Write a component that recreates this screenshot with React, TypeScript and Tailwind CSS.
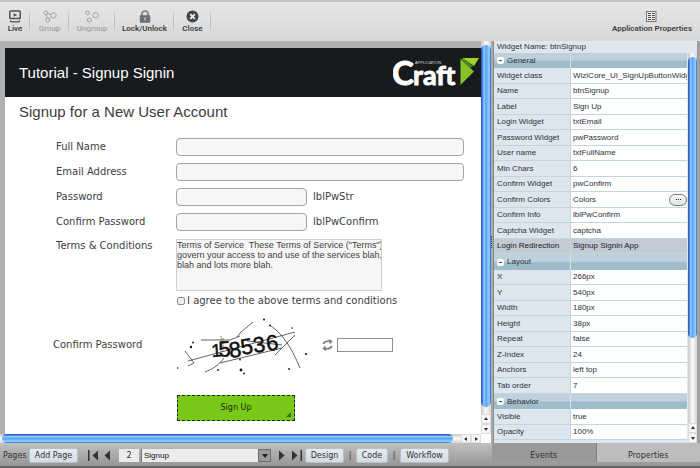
import React, { useState } from "react";

const verdana = "font-['DejaVu_Sans',Verdana,sans-serif]";
const arial = "font-['Liberation_Sans',Arial,sans-serif]";
const barV =
  "bg-[linear-gradient(90deg,#1d4fb0_0%,#3f7ce0_14%,#9fcdfa_30%,#5f9ff0_48%,#6bb4fb_62%,#8fd6ff_82%,#2b62c0_100%)]";
const barH =
  "bg-[linear-gradient(180deg,#1d4fb0_0%,#3f7ce0_14%,#9fcdfa_30%,#5f9ff0_48%,#6bb4fb_62%,#8fd6ff_82%,#2b62c0_100%)]";

function LiveIcon() {
  return (
    <svg width="14" height="13" viewBox="0 0 14 13" fill="none" stroke="#4d5359" aria-hidden="true">
      <rect x="1.8" y="1" width="10.4" height="7.6" rx="0.8" strokeWidth="1.5" />
      <path d="M5.6 3v3.8L9.2 4.9z" fill="#4d5359" stroke="none" />
      <path d="M2 10.4c.6 1.4 1.6 1.5 2.4 1.5h5.2c.8 0 1.8-.1 2.4-1.5" strokeWidth="1.2" />
    </svg>
  );
}

function GroupIcon() {
  return (
    <svg width="14" height="13" viewBox="0 0 14 13" fill="none" stroke="#a3a3a3" strokeWidth="1" aria-hidden="true">
      <circle cx="2.8" cy="2.8" r="1.9" />
      <circle cx="10.6" cy="5.4" r="2.7" />
      <circle cx="4.6" cy="10" r="2" />
      <path d="M4.7 3.3L8 4.6M3.3 4.7l.8 3.4M6.3 8.9l2-1.7" />
    </svg>
  );
}

function UngroupIcon() {
  return (
    <svg width="14" height="13" viewBox="0 0 14 13" fill="none" stroke="#a3a3a3" strokeWidth="1" aria-hidden="true">
      <circle cx="2.6" cy="2.8" r="1.9" />
      <circle cx="10.6" cy="5.4" r="2.7" />
      <circle cx="4.4" cy="10" r="2" />
    </svg>
  );
}

function LockIcon() {
  return (
    <svg width="12" height="13" viewBox="0 0 12 13" aria-hidden="true">
      <path d="M3 6V3.8a3 2.8 0 0 1 6 0V6" fill="none" stroke="#777d83" strokeWidth="1.6" />
      <rect x="0.8" y="5.2" width="10.4" height="7.6" rx="0.8" fill="#656c72" />
      <path d="M1 7.5h10M1 10.4h10" stroke="#81878c" strokeWidth="0.6" />
      <path d="M6 7.4v2.8" stroke="#c9cccf" strokeWidth="1.3" />
    </svg>
  );
}

function CloseIcon() {
  return (
    <svg width="13" height="13" viewBox="0 0 13 13" aria-hidden="true">
      <circle cx="6.5" cy="6.5" r="6" fill="#3f464c" />
      <path d="M4.2 4.2l4.6 4.6M8.8 4.2L4.2 8.8" stroke="#f0f0f0" strokeWidth="1.8" />
    </svg>
  );
}

function PropertiesIcon() {
  return (
    <svg width="11" height="13" viewBox="0 0 11 13" aria-hidden="true">
      <rect x="0.5" y="1.5" width="9.500" height="10" fill="#ececec" stroke="#777" />
      <path d="M2 3.500h3M6 3.500h2.800M2 5.500h3M6 5.500h2.800M2 7.500h3M6 7.500h2.800M2 9.500h3M6 9.500h2.800" stroke="#4b4b4b" strokeWidth="1" />
    </svg>
  );
}

const tools = [
  { label: "Live", icon: <LiveIcon />, width: "w-[30px]", off: false },
  { label: "Group", icon: <GroupIcon />, width: "w-[39px]", off: true },
  { label: "Ungroup", icon: <UngroupIcon />, width: "w-[46px]", off: true },
  { label: "Lock/Unlock", icon: <LockIcon />, width: "w-[59px]", off: false },
  { label: "Close", icon: <CloseIcon />, width: "w-[37px]", off: false },
];

function Toolbar() {
  return (
    <header className="flex h-[41px] shrink-0 items-center justify-between border-t-2 border-[#c2c2c2] bg-linear-to-b from-[#e6e6e6] to-[#d8d8d8] pr-2 font-['Roboto',sans-serif] text-[8px] leading-[10px] font-semibold text-[#3d3d3d]">
      <div className="flex items-center">
        {tools.map((t) => (
          <React.Fragment key={t.label}>
            <button
              type="button"
              disabled={t.off}
              className={`flex flex-col items-center gap-px whitespace-nowrap disabled:text-[#a6a6a6] ${t.width}`}
            >
              {t.icon}
              <span>{t.label}</span>
            </button>
            <span className="-ml-px h-6 w-px bg-linear-to-b from-[#dcdcdc] via-[#b5b5b5] to-[#dcdcdc]" />
          </React.Fragment>
        ))}
      </div>
      <button type="button" className="flex flex-col items-center gap-px whitespace-nowrap">
        <PropertiesIcon />
        <span>Application Properties</span>
      </button>
    </header>
  );
}

function CraftLogo() {
  return (
    <svg width="88" height="49" viewBox="0 0 88 49" role="img" aria-label="Application Craft">
      <g fill="#fff" stroke="#fff" strokeWidth="0.9" fontFamily="Lato, sans-serif" fontWeight="700">
        <text x="-1" y="37" fontSize="33">
          C
        </text>
        <text x="20" y="37" fontSize="27">
          raft
        </text>
      </g>
      <text x="22" y="16" fill="#d5d7d8" fontFamily="Liberation Sans, sans-serif" fontSize="4">
        APPLICATION
      </text>
      <path d="M69 10h17l-5 8z" fill="#9fd02c" />
      <path d="M67.500 11L81 23.500 67.500 37z" fill="#86c226" />
      <path d="M67.500 10.500l4 .5 8.500 7.500-3.500 1.500z" fill="#4c8a1a" />
    </svg>
  );
}

function Captcha() {
  return (
    <svg width="133" height="60" viewBox="0 0 133 60" role="img" aria-label="Captcha 158536">
      <g fill="none" stroke="#222" strokeWidth="0.7">
        <path d="M11 46L118 17M24 25l29 0 10-4M70 26l35 4M43 48l62-15M76 7L64 17 60 22" />
        <path d="M28 57c8-3 15-8 19-14M94 11c13 9 22 25 29 42M98 40l20-20M8 36l9 12M11 51l6-3" />
        <path d="M44 21v18M46 23v14" strokeDasharray="1.500 1" />
      </g>
      <g fill="#111" stroke="#111" strokeWidth="0.5" fontFamily="Liberation Sans, sans-serif" fontSize="22">
        <text transform="translate(35 42) rotate(-5)" fontSize="18">1</text>
        <text transform="translate(42 42) rotate(-4)">5</text>
        <text transform="translate(53 43) rotate(-8)">8</text>
        <text transform="translate(65 40) rotate(-10)">5</text>
        <text transform="translate(77 38) rotate(-8)">3</text>
        <text transform="translate(90 36) rotate(-7)">6</text>
      </g>
      <g fill="#111">
        <circle cx="87" cy="4.500" r="1" />
        <circle cx="93" cy="10.500" r="1" />
        <circle cx="14" cy="32" r="1.200" />
        <circle cx="16" cy="27.500" r="0.900" />
        <circle cx="115" cy="13" r="0.800" />
        <circle cx="129" cy="39" r="1.100" />
        <circle cx="41" cy="55" r="0.900" />
        <circle cx="64" cy="55" r="1.400" />
        <circle cx="67" cy="58.500" r="0.900" />
        <circle cx="112" cy="54" r="0.900" />
        <circle cx="63" cy="44.500" r="0.900" />
        <circle cx="0.700" cy="53" r="0.700" />
      </g>
    </svg>
  );
}

const fieldBox = "h-[18px] rounded border border-[#a3a3a3] bg-[#f6f6f6] px-1 text-[10px]";

function Field({ id, label, type = "text", note }: { id: string; label: string; type?: string; note?: string }) {
  return (
    <div className="flex items-center">
      <label htmlFor={id} className="w-[120px] shrink-0">
        {label}
      </label>
      <input id={id} type={type} className={`${fieldBox} ${note ? "w-[131px]" : "w-[288px]"}`} />
      {note && <span className="ml-1.5">{note}</span>}
    </div>
  );
}

const termsText = `Terms of Service  These Terms of Service ("Terms")
govern your access to and use of the services blah,
blah and lots more blah.`;

function SignupPage() {
  return (
    <main className="min-w-0 flex-1 overflow-hidden bg-white">
      <div className="flex h-[49px] items-center justify-between bg-[#171b1e] pl-3.5">
        <h1 className={`${arial} text-[15px] leading-5 text-white`}>Tutorial - Signup Signin</h1>
        <CraftLogo />
      </div>
      <h2 className={`${arial} pt-[5px] pl-3.5 text-[15px] leading-5 text-[#3c3c3c]`}>Signup for a New User Account</h2>
      <form
        className={`${verdana} pt-4 text-[10px] leading-3 text-[#3e3e3e]`}
        onSubmit={(e) => e.preventDefault()}
      >
        <div className="flex flex-col gap-[7px] pl-[51px]">
          <Field id="full-name" label="Full Name" />
          <Field id="email" label="Email Address" />
          <Field id="password" label="Password" type="password" note="lblPwStr" />
          <Field id="confirm" label="Confirm Password" type="password" note="lblPwConfirm" />
          <div className="flex items-start pt-px">
            <label htmlFor="terms" className="w-[120px] shrink-0 pt-px">
              Terms &amp; Conditions
            </label>
            <textarea
              id="terms"
              readOnly
              className={`${arial} h-[52px] w-[206px] resize-none overflow-hidden border border-[#cfcfcf] bg-[#f6f6f6] text-[9px] leading-[10px] whitespace-pre`}
              defaultValue={termsText}
            />
          </div>
        </div>
        <label className="mt-1 ml-[172px] flex items-center gap-0.5">
          <input
            type="checkbox"
            className="size-2 appearance-none rounded-xs border border-[#8f8f8f] bg-[#ededed] checked:bg-[#5f9ff0]"
          />
          I agree to the above terms and conditions
        </label>
        <div className="mt-2 flex items-center pl-12">
          <label htmlFor="captcha" className="w-[124px] shrink-0">
            Confirm Password
          </label>
          <Captcha />
          <button type="button" aria-label="New captcha" className="mr-1 ml-3">
            <svg width="11" height="12" viewBox="0 0 11 12" aria-hidden="true">
              <path d="M1.300 5C2 2.500 4 2 7 2.300" fill="none" stroke="#777" strokeWidth="1.700" />
              <path d="M6.500 0l4 2-2.500 3.500z" fill="#777" />
              <path d="M9.700 7C9 9.500 7 10 4 9.700" fill="none" stroke="#777" strokeWidth="1.700" />
              <path d="M4.500 12l-4-2L3 6.500z" fill="#777" />
            </svg>
          </button>
          <input id="captcha" type="text" className="h-3.5 w-14 border border-[#8f8f8f] bg-white px-1" />
        </div>
        <button
          type="submit"
          className="relative mt-5 ml-[172px] h-[26px] w-[118px] border border-dashed border-[#222] bg-[#78c817] text-[8px] text-[#1c2a10]"
        >
          Sign Up
          <svg width="5" height="5" viewBox="0 0 5 5" className="absolute right-[3px] bottom-[3px]" aria-hidden="true">
            <path d="M5 0v5H0z" fill="#3f6a17" />
          </svg>
        </button>
      </form>
    </main>
  );
}

function Arrow({ dir }: { dir: "up" | "down" | "left" | "right" }) {
  const d = { up: "M1 4h4L3 1z", down: "M1 2h4L3 5z", left: "M4 1v4L1 3z", right: "M2 1v4l3-2z" }[dir];
  return (
    <svg width="6" height="6" viewBox="0 0 6 6" aria-hidden="true">
      <path d={d} fill="#333" />
    </svg>
  );
}

const stepButton = "flex items-center justify-center border border-[#dcdcdc] bg-[#f7f7f7]";

type Prop = { name: string; value?: string; group?: boolean; selected?: boolean; more?: boolean };

const properties: Prop[] = [
  { name: "General", group: true },
  { name: "Widget class", value: "WiziCore_UI_SignUpButtonWidg" },
  { name: "Name", value: "btnSignup" },
  { name: "Label", value: "Sign Up" },
  { name: "Login Widget", value: "txtEmail" },
  { name: "Password Widget", value: "pwPassword" },
  { name: "User name", value: "txtFullName" },
  { name: "Min Chars", value: "6" },
  { name: "Confirm Widget", value: "pwConfirm" },
  { name: "Confirm Colors", value: "Colors", more: true },
  { name: "Confirm Info", value: "lblPwConfirm" },
  { name: "Captcha Widget", value: "captcha" },
  { name: "Login Redirection", value: "Signup Signin App", selected: true },
  { name: "Layout", group: true },
  { name: "X", value: "266px" },
  { name: "Y", value: "540px" },
  { name: "Width", value: "180px" },
  { name: "Height", value: "38px" },
  { name: "Repeat", value: "false" },
  { name: "Z-Index", value: "24" },
  { name: "Anchors", value: "left top" },
  { name: "Tab order", value: "7" },
  { name: "Behavior", group: true },
  { name: "Visible", value: "true" },
  { name: "Opacity", value: "100%" },
];

const groupCell = "bg-linear-to-b from-[#bed0db] from-45% to-[#9fbccb] to-55%";

function PropertyRow({ p }: { p: Prop }) {
  if (p.group) {
    return (
      <tr className="odd:h-[15px] even:h-4">
        <th scope="rowgroup" className={`${groupCell} border-r border-[#d5e1e8] p-0 text-left font-normal`}>
          <span className="flex items-center gap-[3px] pl-[3px]">
            <button
              type="button"
              aria-label={`Collapse ${p.name}`}
              className="flex size-[7px] items-center justify-center rounded-xs bg-white"
            >
              <span className="h-px w-[3px] bg-[#444]" />
            </button>
            {p.name}
          </span>
        </th>
        <td className={`${groupCell} p-0`} />
      </tr>
    );
  }
  return (
    <tr className={`odd:h-[15px] even:h-4 ${p.selected ? "bg-[#c2cad3] text-[#1c1c2c]" : "bg-white"}`}>
      <th
        scope="row"
        className={`border-r border-b border-[#c5d5e0] p-0 pl-[3px] text-left font-normal whitespace-nowrap ${p.selected ? "" : "bg-[#dde6ed]"}`}
      >
        {p.name}
      </th>
      <td className="border-b border-[#c5d5e0] p-0 pl-0.5">
        <span className="flex items-center justify-between overflow-hidden whitespace-nowrap">
          {p.value}
          {p.more && (
            <button
              type="button"
              aria-label="Edit colors"
              className="flex h-3 w-[18px] items-center justify-center gap-px rounded-full border border-[#777] bg-linear-to-b from-white to-[#dedede]"
            >
              <span className="size-px bg-[#222]" />
              <span className="size-px bg-[#222]" />
              <span className="size-px bg-[#222]" />
            </button>
          )}
        </span>
      </td>
    </tr>
  );
}

function PropertiesPanel() {
  return (
    <aside className={`${arial} flex w-[203px] shrink-0 flex-col bg-[#dfe7ee] text-[8px] leading-3 text-[#2c3238]`}>
      <div className="h-3 pl-[3px]">Widget Name: btnSignup</div>
      <div className="flex min-h-0 flex-1">
        <div className="min-h-0 min-w-0 flex-1 overflow-hidden">
          <table className="w-full table-fixed border-separate border-spacing-0">
            <colgroup>
              <col className="w-[77px]" />
              <col />
            </colgroup>
            <tbody>
              {properties.map((p) => (
                <PropertyRow key={p.name} p={p} />
              ))}
            </tbody>
          </table>
        </div>
        <div className="ml-px flex w-[9px] flex-col bg-linear-to-r from-[#c9c9c9] via-[#fafafa] to-[#d5d5d5] pt-1">
          <div className={`${barV} h-[281px] rounded-full`} />
          <div className="flex-1" />
          <button type="button" aria-label="Scroll up" className={`${stepButton} h-2.5`}>
            <Arrow dir="up" />
          </button>
          <button type="button" aria-label="Scroll down" className={`${stepButton} h-2.5`}>
            <Arrow dir="down" />
          </button>
        </div>
      </div>
    </aside>
  );
}

const pill =
  "h-[15px] shrink-0 rounded-xs border border-[#b4bfc7] bg-linear-to-b from-[#e6ecf0] to-[#d2dce3] text-center leading-3";

function BottomBar() {
  const [tab, setTab] = useState("Events");
  return (
    <footer
      className={`${verdana} flex h-[25px] shrink-0 border-b-2 border-[#656565] bg-linear-to-b from-[#c0c0c0] to-[#969696] text-[8px] leading-3 text-[#333]`}
    >
      <div className="flex min-w-0 flex-1 items-center pt-0.5 pl-[3px]">
        <span className="w-[26px]">Pages</span>
        <button type="button" className={`${pill} w-[49px]`}>
          Add Page
        </button>
        <button type="button" aria-label="First page" className="ml-2.5">
          <svg width="10" height="11" viewBox="0 0 10 11" fill="#333" aria-hidden="true">
            <path d="M0 0h1.500v11H0zM10 0.500v10L4.500 5.500z" />
          </svg>
        </button>
        <button type="button" aria-label="Previous page" className="ml-1.5">
          <svg width="6" height="11" viewBox="0 0 6 11" fill="#333" aria-hidden="true">
            <path d="M6 0.500v10L0.500 5.500z" />
          </svg>
        </button>
        <input
          aria-label="Page number"
          defaultValue="2"
          className="ml-[9px] h-[13px] w-5 bg-[#ececec] text-center"
        />
        <div className="relative ml-0.5 h-[13px] w-[130px] bg-[#ececec]">
          <select
            aria-label="Page"
            className={`${arial} h-full w-full appearance-none border-l border-[#777] bg-transparent pl-0.5 leading-3 text-[#111]`}
          >
            <option>Signup</option>
          </select>
          <span className="pointer-events-none absolute inset-y-0 right-0 flex w-[13px] items-center justify-center border border-[#6e6e6e] bg-[#9a9a9a]">
            <svg width="6" height="4" viewBox="0 0 6 4" aria-hidden="true">
              <path d="M0 0h6L3 4z" fill="#222" />
            </svg>
          </span>
        </div>
        <button type="button" aria-label="Next page" className="ml-2">
          <svg width="6" height="11" viewBox="0 0 6 11" fill="#333" aria-hidden="true">
            <path d="M0 0.500v10l5.500-5z" />
          </svg>
        </button>
        <button type="button" aria-label="Last page" className="ml-[7px]">
          <svg width="10" height="11" viewBox="0 0 10 11" fill="#333" aria-hidden="true">
            <path d="M8.500 0H10v11H8.500zM0 0.500v10l5.500-5z" />
          </svg>
        </button>
        <button type="button" className={`${pill} ml-[3px] w-[39px]`}>
          Design
        </button>
        <span className="w-3 text-center">|</span>
        <button type="button" className={`${pill} w-8`}>
          Code
        </button>
        <span className="w-3 text-center">|</span>
        <button type="button" className={`${pill} w-[49px]`}>
          Workflow
        </button>
      </div>
      <div role="tablist" className="flex w-[208px] shrink-0 pb-1">
        {["Events", "Properties"].map((name) => (
          <button
            key={name}
            type="button"
            role="tab"
            aria-selected={tab === name}
            onClick={() => setTab(name)}
            className="flex-1 rounded-b-xs bg-[#bdbdbd] pt-1.5 text-center aria-selected:border-r aria-selected:border-[#808080] aria-selected:bg-[#999]"
          >
            {name}
          </button>
        ))}
      </div>
    </footer>
  );
}

export default function App() {
  return (
    <div className="flex h-screen flex-col overflow-hidden bg-[#b0b0b0]">
      <Toolbar />
      <div className="flex min-h-0 flex-1">
        <div className="flex min-w-0 flex-1 flex-col">
          <div className="flex min-h-0 flex-1">
            <div className="flex min-w-0 flex-1 pt-[7px] pl-[5px]">
              <SignupPage />
            </div>
            <div className="flex w-2.5 flex-col bg-linear-to-r from-[#c9c9c9] via-[#fafafa] to-[#d5d5d5] pt-1">
              <div className={`${barV} flex-1 rounded-full`} />
              <div className="h-[7px]" />
              <button type="button" aria-label="Scroll up" className={`${stepButton} h-2.5`}>
                <Arrow dir="up" />
              </button>
              <button type="button" aria-label="Scroll down" className={`${stepButton} h-2.5`}>
                <Arrow dir="down" />
              </button>
            </div>
          </div>
          <div className="flex h-[9px] shrink-0 bg-linear-to-b from-[#c9c9c9] via-[#fafafa] to-[#d5d5d5] pl-0.5">
            <div className={`${barH} flex-1 rounded-full`} />
            <div className="w-2" />
            <button type="button" aria-label="Scroll left" className={`${stepButton} w-2.5`}>
              <Arrow dir="left" />
            </button>
            <button type="button" aria-label="Scroll right" className={`${stepButton} w-2.5`}>
              <Arrow dir="right" />
            </button>
            <div className="w-2.5 bg-white" />
          </div>
        </div>
        <div className="flex w-[3px] flex-col justify-center border-r border-[#8a8a8a] bg-[#a9a9a9]">
          <span className="h-3 border-l border-dotted border-[#444]" />
        </div>
        <PropertiesPanel />
        <div className="w-[3px] bg-[#a0a0a0]" />
      </div>
      <BottomBar />
    </div>
  );
}
